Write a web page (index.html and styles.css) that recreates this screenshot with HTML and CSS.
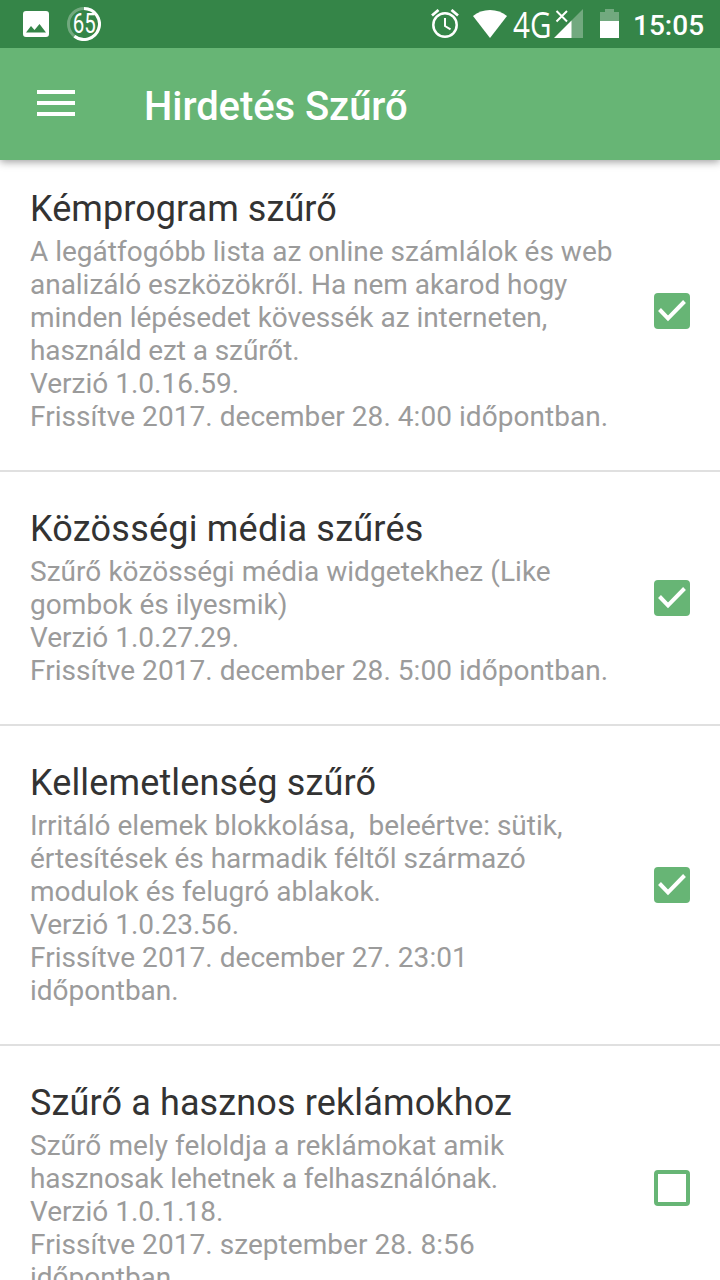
FILE: index.html
```html
<!DOCTYPE html>
<html lang="hu">
<head>
<meta charset="utf-8">
<title>Hirdetés Szűrő</title>
<link rel="stylesheet" href="styles.css">
</head>
<body>
<div class="status">
  <svg class="photo" width="26" height="26" viewBox="0 0 26 26"><path fill="#fff" fill-rule="evenodd" d="M3 0h20a3 3 0 0 1 3 3v20a3 3 0 0 1-3 3H3a3 3 0 0 1-3-3V3a3 3 0 0 1 3-3zM3 21.500h20L16.500 13l-5 6-3.500-4z"/></svg>
  <div class="battery-level">
    <svg width="34" height="34" viewBox="0 0 34 34" fill="none" stroke="#fff" stroke-width="3"><circle cx="17" cy="17" r="15.500" opacity=".3"/><path d="M17 1.500a15.500 15.500 0 1 1-9.600 27.700"/></svg>
    <span>65</span>
  </div>
  <div class="spacer"></div>
  <svg class="alarm" width="28" height="30" viewBox="0 0 28 30" fill="none" stroke="#fff"><circle cx="14" cy="16" r="11.700" stroke-width="2.500"/><path stroke-width="2" d="M14 9v8l5.500 3.300"/><path stroke-width="2.800" d="M1 6.500L7.500 1M27 6.500L20.500 1"/></svg>
  <svg class="wifi" width="34" height="28" viewBox="0 0 34 28"><path fill="#fff" d="M0 6C9-2 25-2 34 6L17 28z"/></svg>
  <span class="network">4G</span>
  <svg class="signal" width="30" height="30" viewBox="0 0 30 30"><path fill="#fff" opacity=".3" d="M29 0v29H17V12z"/><path fill="#fff" d="M17.500 11.500V29H0z"/><path stroke="#358548" stroke-width="5" d="M3 2l10 10M13 2L3 12"/><path stroke="#fff" stroke-width="2" d="M2.500 2l10.500 10.500M13 2L2.500 12.500"/></svg>
  <svg class="battery" width="19" height="29" viewBox="0 0 19 29"><path fill="#fff" opacity=".3" d="M5 0h9v3h5v9H0V3h5z"/><path fill="#fff" d="M0 12h19v17H0z"/></svg>
  <span class="clock">15:05</span>
</div>
<header class="toolbar">
  <svg width="38" height="26" viewBox="0 0 38 26"><path fill="#fff" d="M0 0h38v4H0zM0 11h38v4H0zM0 22h38v4H0z"/></svg>
  <h1>Hirdetés Szűrő</h1>
</header>
<main class="list">
  <section class="item">
    <div class="text">
      <h2 class="snug">Kémprogram szűrő</h2>
      <p>A legátfogóbb lista az online számlálok és web<br><span class="tight">analizáló eszközökről. Ha nem akarod hogy</span><br><span class="tight">minden lépésedet kövessék az interneten,</span><br><span class="tighter">használd ezt a szűrőt.</span><br>Verzió 1.0.16.59.<br><span class="loose">Frissítve 2017. december 28. 4:00 időpontban.</span></p>
    </div>
    <svg class="check" viewBox="0 0 36 36"><rect width="36" height="36" rx="4" fill="#67b575"/><path d="M5.500 16.500l8.500 8.800L30.500 8.500" fill="none" stroke="#fff" stroke-width="4"/></svg>
  </section>
  <section class="item">
    <div class="text">
      <h2 class="wide">Közösségi média szűrés</h2>
      <p><span class="loose">Szűrő közösségi média widgetekhez (Like</span><br><span class="loose">gombok és ilyesmik)</span><br>Verzió 1.0.27.29.<br><span class="loose">Frissítve 2017. december 28. 5:00 időpontban.</span></p>
    </div>
    <svg class="check" viewBox="0 0 36 36"><rect width="36" height="36" rx="4" fill="#67b575"/><path d="M5.500 16.500l8.500 8.800L30.500 8.500" fill="none" stroke="#fff" stroke-width="4"/></svg>
  </section>
  <section class="item">
    <div class="text">
      <h2>Kellemetlenség szűrő</h2>
      <p>Irritáló elemek blokkolása,&nbsp; beleértve: sütik,<br><span class="tight">értesítések és harmadik féltől származó</span><br>modulok és felugró ablakok.<br>Verzió 1.0.23.56.<br><span class="loose">Frissítve 2017. december 27. 23:01</span><br>időpontban.</p>
    </div>
    <svg class="check" viewBox="0 0 36 36"><rect width="36" height="36" rx="4" fill="#67b575"/><path d="M5.500 16.500l8.500 8.800L30.500 8.500" fill="none" stroke="#fff" stroke-width="4"/></svg>
  </section>
  <section class="item last">
    <div class="text">
      <h2>Szűrő a hasznos reklámokhoz</h2>
      <p><span class="loose">Szűrő mely feloldja a reklámokat amik</span><br><span class="tighter">hasznosak lehetnek a felhasználónak.</span><br>Verzió 1.0.1.18.<br><span class="loose">Frissítve 2017. szeptember 28. 8:56</span><br>időpontban.</p>
    </div>
    <svg class="check" viewBox="0 0 36 36"><rect x="2" y="2" width="32" height="32" rx="2" fill="none" stroke="#67b575" stroke-width="4"/></svg>
  </section>
</main>
</body>
</html>
```
FILE: styles.css
```css
* { box-sizing: border-box; margin: 0; padding: 0; }
body {
  display: flex;
  flex-direction: column;
  width: 720px;
  height: 1280px;
  overflow: hidden;
  background: #fff;
  font-family: Roboto, sans-serif;
}
svg { display: block; flex: none; }
.status {
  display: flex;
  flex: none;
  align-items: center;
  height: 48px;
  padding: 0 16px 0 23px;
  background: #358548;
  color: #fff;
  position: relative;
  z-index: 2;
}
.battery-level { display: grid; place-items: center; margin-left: 18px; }
.battery-level > * { grid-area: 1 / 1; }
.battery-level span { font-size: 27px; line-height: 34px; transform: scaleX(.76); }
.spacer { flex: 1; }
.alarm { margin-right: 14px; }
.wifi { margin-right: 6px; }
.network {
  width: 39px;
  font: 37px/48px "Open Sans", sans-serif;
  transform: scaleX(.8);
  transform-origin: left;
  white-space: nowrap;
}
.signal { margin: 0 16px 0 2px; }
.battery { margin-right: 14px; margin-bottom: 2px; }
.clock { font-size: 28px; font-weight: 500; line-height: 48px; width: 71px; white-space: nowrap; padding-top: 3px; }
.toolbar {
  display: flex;
  flex: none;
  align-items: center;
  height: 112px;
  padding-left: 37px;
  background: #67b575;
  color: #fff;
  box-shadow: 0 2px 8px rgba(0, 0, 0, .38);
  position: relative;
  z-index: 1;
}
.toolbar svg { margin-bottom: 2px; }
.toolbar h1 { margin-left: 69px; font-size: 40px; font-weight: 500; line-height: 48px; padding-top: 6px; letter-spacing: -.07px; white-space: nowrap; }
.list { margin-top: -8px; }
.item {
  display: flex;
  align-items: center;
  justify-content: space-between;
  padding: 0 30px;
  border-bottom: 2px solid #e0e0e0;
}
.text { padding: 36px 0 37px; white-space: nowrap; }
.item h2 { margin-bottom: 5px; color: #333; font-size: 36px; font-weight: 400; line-height: 42px; letter-spacing: .13px; }
.item h2.snug { letter-spacing: .06px; }
.item h2.wide { letter-spacing: .22px; }
.item p { color: #9b9b9b; font-size: 28px; line-height: 33px; }
.loose { letter-spacing: .05px; }
.tight { letter-spacing: -.03px; }
.tighter { letter-spacing: -.1px; }
.check { width: 36px; height: 36px; }
.last .text { padding-bottom: 36px; }
```
